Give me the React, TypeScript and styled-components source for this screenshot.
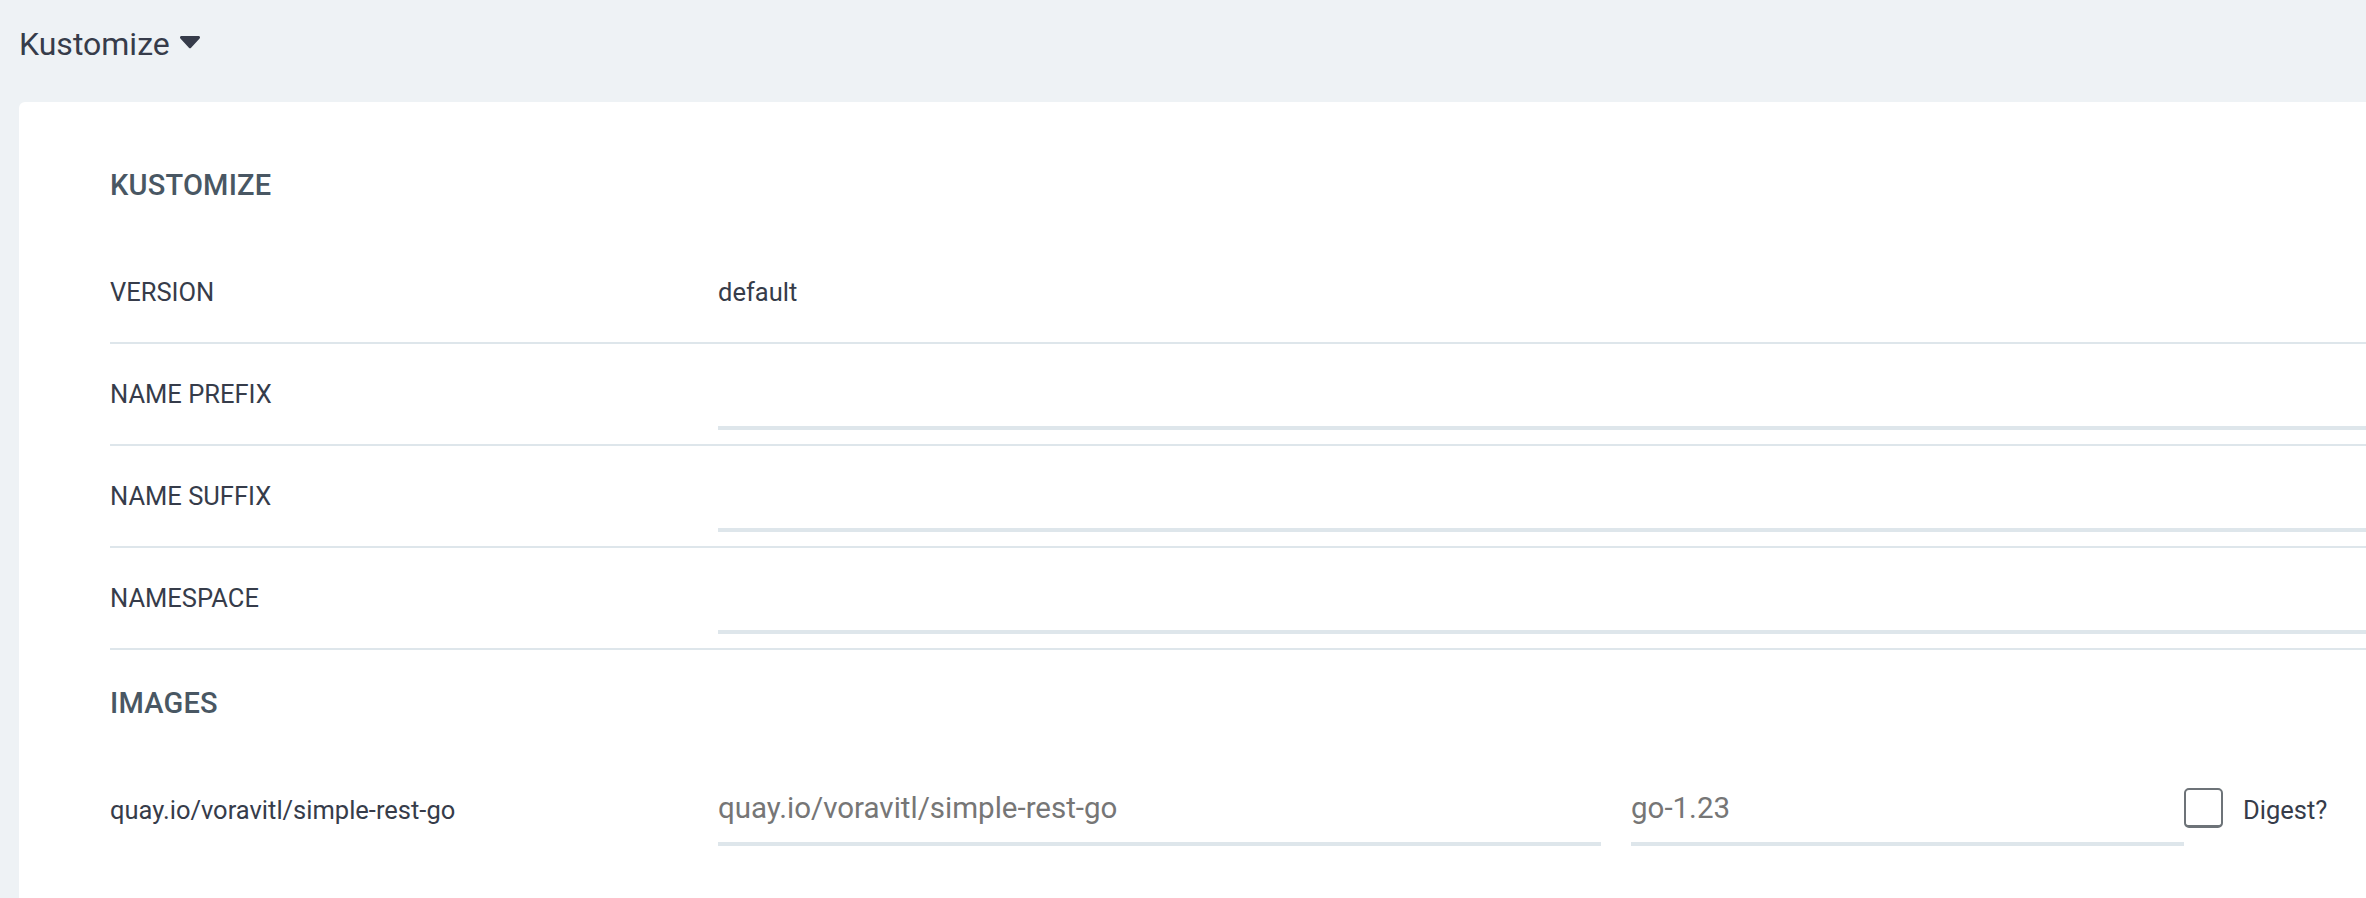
import styled, { createGlobalStyle } from "styled-components";

const GlobalStyle = createGlobalStyle`
    html, body {
        margin: 0;
        padding: 0;
        background-color: #eef2f5;
        font-family: Roboto, "Liberation Sans", sans-serif;
        color: #363c4a;
    }
`;

const Page = styled.div`
    width: 100vw;
    height: 898px;
    overflow: hidden;
    padding: 24px 0 0 19px;
    box-sizing: border-box;
`;

const Header = styled.div`
    display: flex;
    align-items: center;
    gap: 10px;
    height: 40px;
    margin-bottom: 38px;
    font-size: 32px;
    line-height: 40px;
    color: #363c4a;
`;

const Caret = styled.svg`
    width: 20px;
    height: 13px;
    margin-top: -4px;
    fill: #363c4a;
`;

const Card = styled.div`
    width: 2500px;
    padding: 30px 90px 60px 91px;
    background-color: #ffffff;
    border-radius: 6px;
    box-sizing: border-box;
`;

const SectionTitle = styled.h2`
    margin: 33px 0 37px;
    font-size: 29px;
    line-height: 40px;
    font-weight: 500;
    letter-spacing: 0.2px;
    color: #495763;
`;

const Row = styled.div<{ $divider?: boolean }>`
    display: grid;
    grid-template-columns: 608px 1fr;
    align-items: center;
    height: 100px;
    border-bottom: ${(p) => (p.$divider ? "2px solid #dee6eb" : "none")};
`;

const Label = styled.div`
    font-size: 25.5px;
    line-height: 30px;
    color: #363c4a;
`;

const Value = styled.div`
    font-size: 25.5px;
    line-height: 30px;
    color: #363c4a;
`;

const Field = styled.input<{ $width?: number }>`
    display: block;
    width: ${(p) => (p.$width ? `${p.$width}px` : "100%")};
    height: 72px;
    margin: 0;
    padding: 0;
    border: 0;
    border-bottom: 4px solid #dee6eb;
    box-sizing: border-box;
    background: transparent;
    font-family: Roboto, "Liberation Sans", sans-serif;
    font-size: 29.5px;
    color: #767676;
    outline: none;
    &::placeholder {
        color: #767676;
    }
`;

const ImageFields = styled.div`
    display: flex;
    align-items: center;
`;

const FieldGap = styled.div`
    width: 30px;
`;

const CheckBox = styled.span`
    display: inline-block;
    width: 39px;
    height: 40px;
    margin-top: -4px;
    border: 2px solid #6d7378;
    border-bottom-width: 3px;
    border-radius: 5px;
    box-sizing: border-box;
    background: #ffffff;
`;

const CheckLabel = styled.span`
    margin-left: 20px;
    font-size: 25.5px;
    color: #363c4a;
`;

export default function App() {
    const fields = ["NAME PREFIX", "NAME SUFFIX", "NAMESPACE"];

    return (
        <>
            <GlobalStyle />
            <Page>
                <Header>
                    Kustomize
                    <Caret viewBox="0 0 20 13">
                        <path d="M1.5 0h17c1.3 0 2 1.5 1.1 2.4l-8.5 9.4c-.6.7-1.6.7-2.2 0L.4 2.4C-.5 1.5.2 0 1.5 0z" />
                    </Caret>
                </Header>
                <Card>
                    <SectionTitle>KUSTOMIZE</SectionTitle>
                    <Row $divider>
                        <Label>VERSION</Label>
                        <Value>default</Value>
                    </Row>
                    {fields.map((f) => (
                        <Row key={f} $divider>
                            <Label>{f}</Label>
                            <Field />
                        </Row>
                    ))}
                    <SectionTitle>IMAGES</SectionTitle>
                    <Row>
                        <Label>quay.io/voravitl/simple-rest-go</Label>
                        <ImageFields>
                            <Field
                                $width={883}
                                placeholder="quay.io/voravitl/simple-rest-go"
                            />
                            <FieldGap />
                            <Field $width={553} placeholder="go-1.23" />
                            <CheckBox />
                            <CheckLabel>Digest?</CheckLabel>
                        </ImageFields>
                    </Row>
                </Card>
            </Page>
        </>
    );
}
